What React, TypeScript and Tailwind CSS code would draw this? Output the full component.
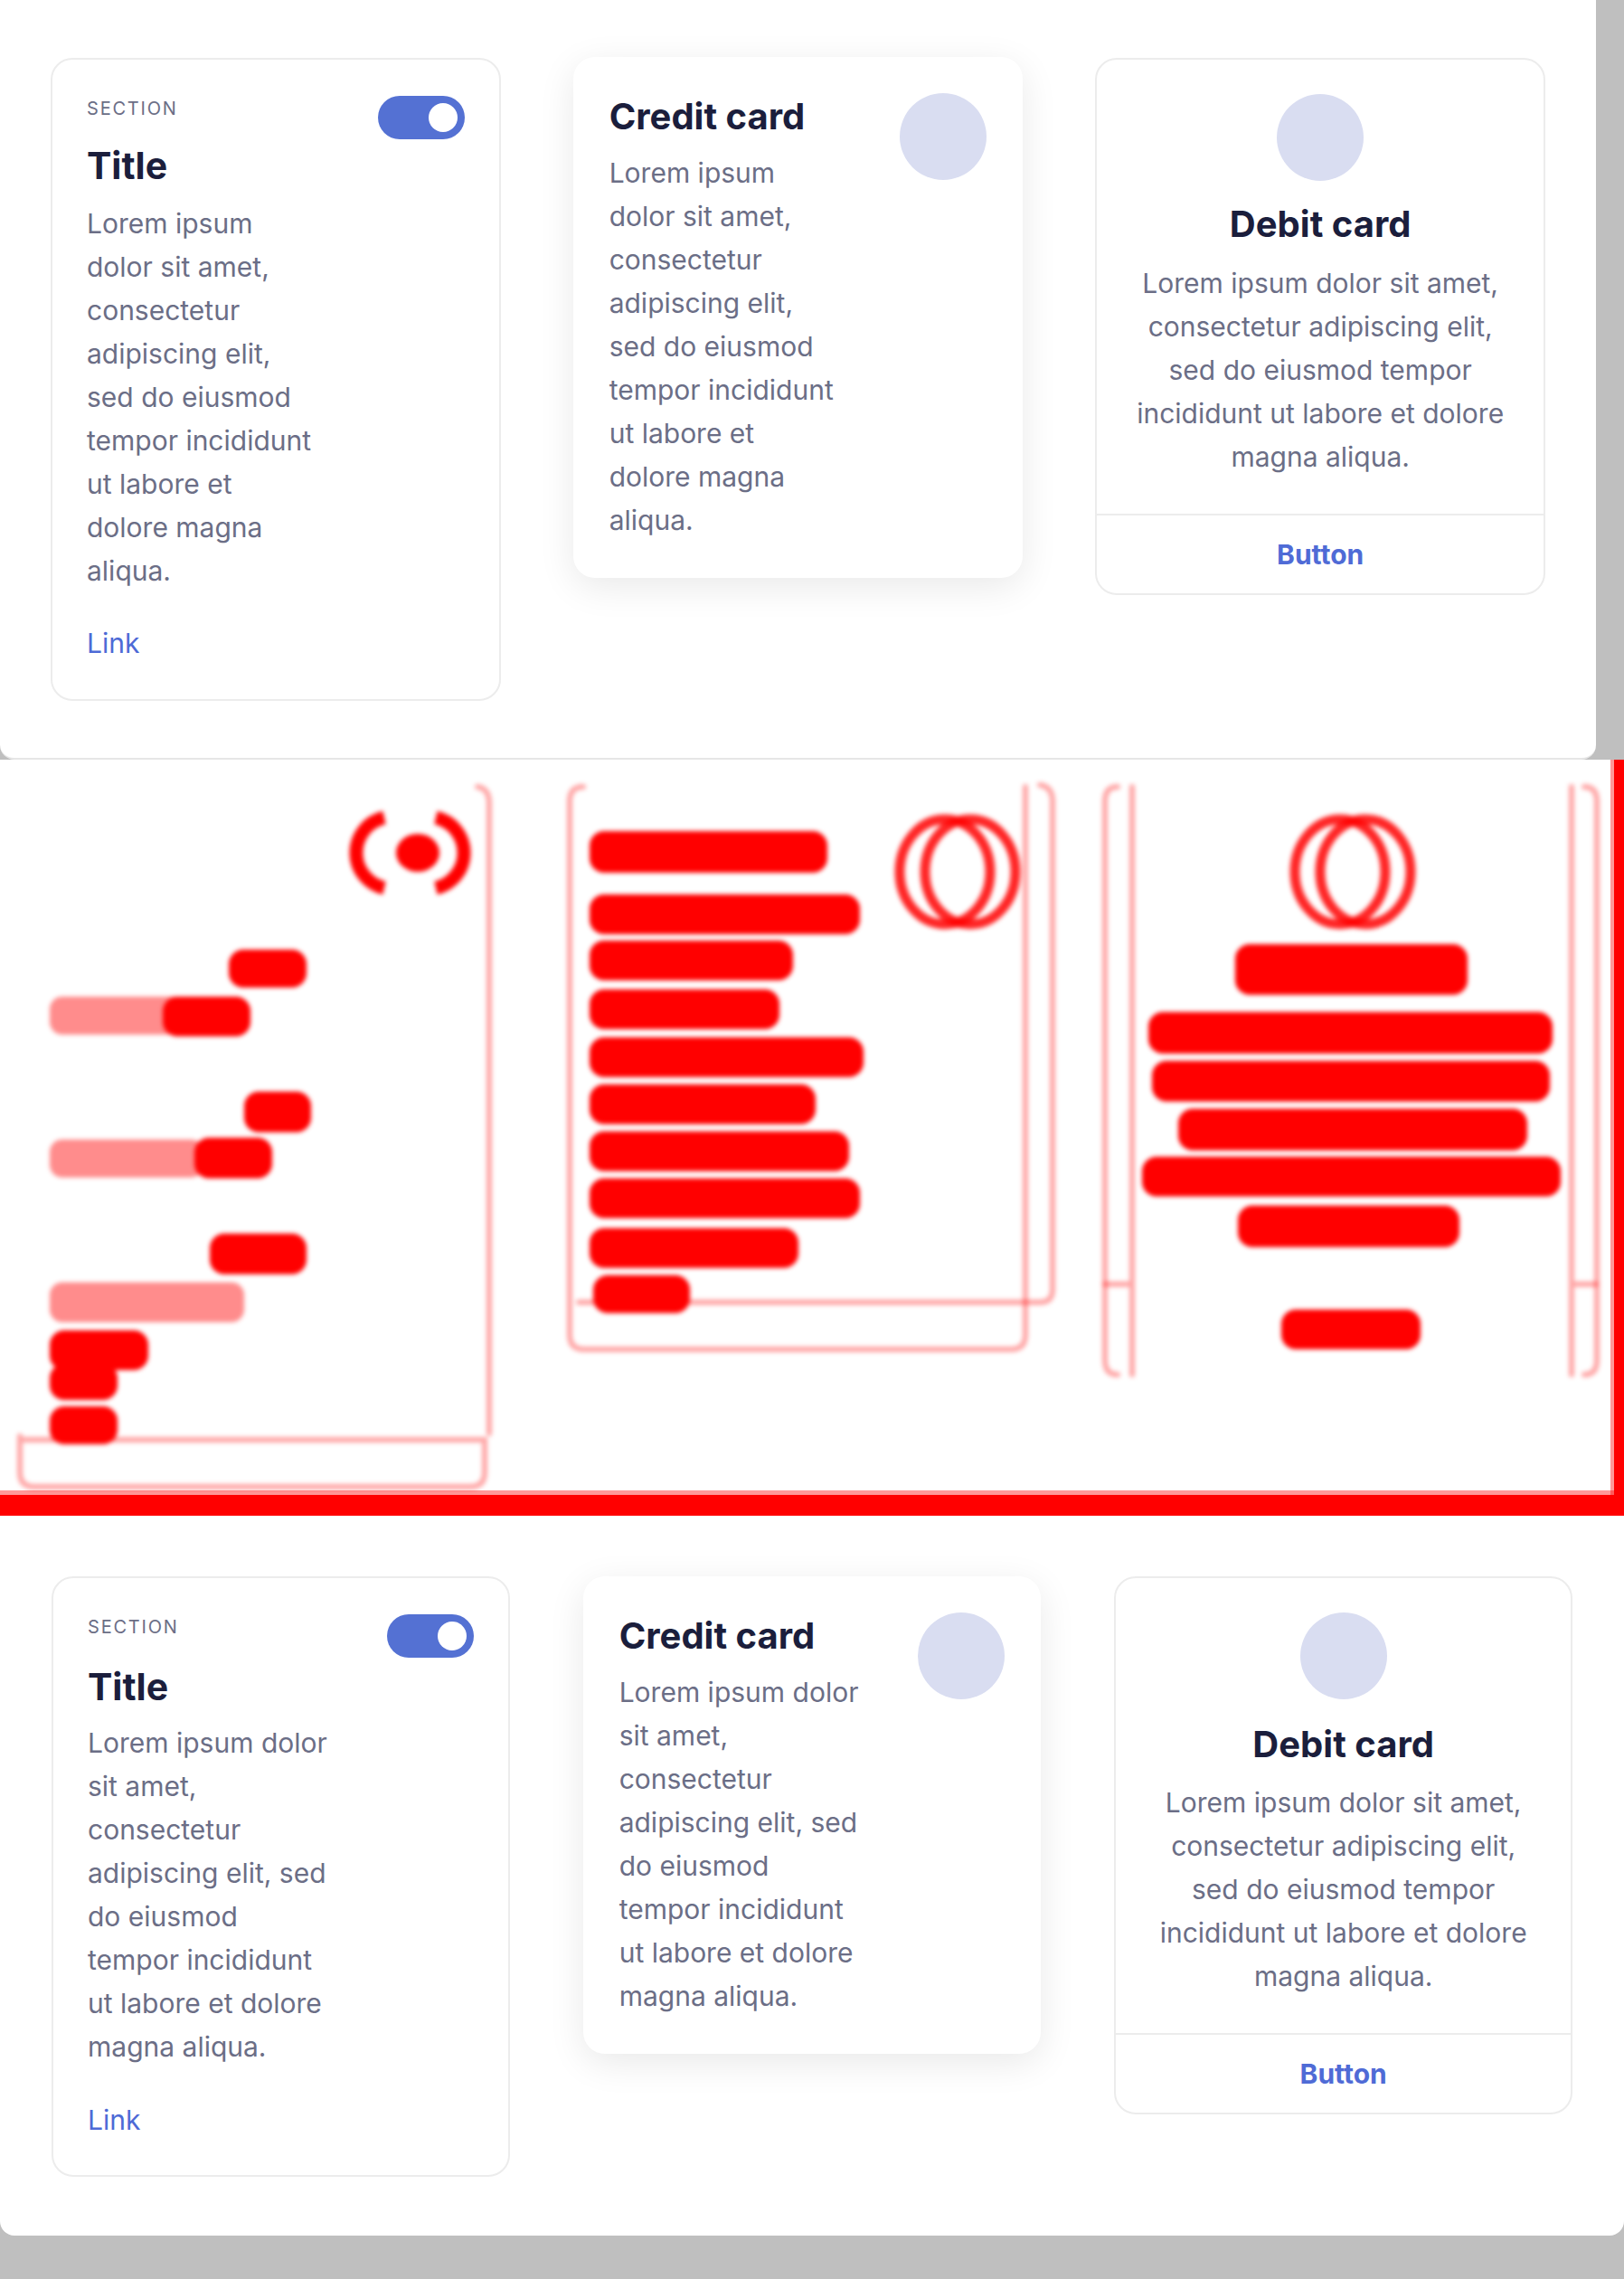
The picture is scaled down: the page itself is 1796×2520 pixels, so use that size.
import React from 'react'

const narrowLines = ['Lorem ipsum', 'dolor sit amet,', 'consectetur', 'adipiscing elit,', 'sed do eiusmod', 'tempor incididunt', 'ut labore et', 'dolore magna', 'aliqua.']
const wideLines = ['Lorem ipsum dolor', 'sit amet,', 'consectetur', 'adipiscing elit, sed', 'do eiusmod', 'tempor incididunt', 'ut labore et dolore', 'magna aliqua.']
const centerLines = ['Lorem ipsum dolor sit amet,', 'consectetur adipiscing elit,', 'sed do eiusmod tempor', 'incididunt ut labore et dolore', 'magna aliqua.']

function Lines({ lines, className = '' }: { lines: string[]; className?: string }) {
  return (
    <p className={`text-[30px] leading-[48px] text-[#6b6e86] ${className}`}>
      {lines.map((l, i) => (
        <span key={i} className="block whitespace-nowrap">{l}</span>
      ))}
    </p>
  )
}

function Toggle() {
  return (
    <div className="flex h-12 w-24 shrink-0 items-center justify-end rounded-full bg-[#5471d3] px-2">
      <div className="h-8 w-8 rounded-full bg-white" />
    </div>
  )
}

function SectionCard({ lines, wide }: { lines: string[]; wide?: boolean }) {
  return (
    <div className={`rounded-[24px] border-2 border-[#ececec] bg-white px-[38px] pt-10 ${wide ? 'pb-[37px]' : 'pb-[38px]'}`}>
      <div className="flex items-start justify-between">
        <div>
          <div className="text-[20px] leading-[28px] tracking-[0.09em] text-[#6b6e86]">SECTION</div>
          <h2 className={`${wide ? 'mt-[26px]' : 'mt-[23px]'} text-[41px] font-bold leading-[52px] text-[#1b1e3c]`}>Title</h2>
        </div>
        <Toggle />
      </div>
      <Lines lines={lines} className={wide ? 'mt-[12px]' : 'mt-[14px]'} />
      <a className={`${wide ? 'mt-[33px]' : 'mt-[32px]'} block text-[30px] leading-[48px] text-[#4d6ad6]`}>Link</a>
    </div>
  )
}

function CreditCard({ lines }: { lines: string[] }) {
  return (
    <div className="flex items-start justify-between rounded-[24px] bg-white p-10 shadow-[0_10px_40px_rgba(0,0,0,0.09)]">
      <div>
        <h2 className="text-[40px] font-bold leading-[52px] text-[#1b1e3c]">Credit card</h2>
        <Lines lines={lines} className="mt-[12px]" />
      </div>
      <div className="h-24 w-24 shrink-0 rounded-full bg-[#d9ddf1]" />
    </div>
  )
}

function DebitCard({ wide }: { wide?: boolean }) {
  return (
    <div className="rounded-[24px] border-2 border-[#ececec] bg-white text-center">
      <div className="flex flex-col items-center px-[38px] pt-[38px] pb-[39px]">
        <div className="h-24 w-24 rounded-full bg-[#d9ddf1]" />
        <h2 className={`${wide ? 'mt-[24px]' : 'mt-[22px]'} text-[40px] font-bold leading-[52px] text-[#1b1e3c]`}>Debit card</h2>
        <Lines lines={centerLines} className={wide ? 'mt-[14px]' : 'mt-[15px]'} />
      </div>
      <div className="border-t-2 border-[#ececec] pt-[19px] pb-[19px] text-[30px] font-bold leading-[48px] text-[#4f6bd6]">Button</div>
    </div>
  )
}

const solid: [number, number, number, number][] = [
  // card 1
  [253, 210, 86, 42], [180, 262, 97, 44], [270, 367, 74, 45], [215, 418, 86, 45], [232, 524, 107, 45],
  [55, 631, 109, 44], [55, 668, 75, 40], [55, 715, 75, 42],
  // card 2
  [652, 79, 263, 46], [652, 149, 299, 44], [652, 200, 225, 44], [652, 254, 210, 44], [652, 307, 303, 44],
  [652, 359, 250, 44], [652, 411, 287, 44], [652, 463, 299, 44], [652, 518, 231, 44], [656, 570, 107, 42],
  // card 3
  [1366, 204, 257, 56], [1270, 279, 447, 46], [1274, 333, 440, 45], [1303, 386, 386, 46], [1263, 439, 463, 44],
  [1369, 493, 245, 46], [1417, 608, 154, 44],
]

const faint: [number, number, number, number][] = [
  [55, 262, 150, 42], [55, 420, 170, 42], [55, 578, 215, 44],
]

function DiffImage() {
  return (
    <svg viewBox="0 0 1796 836" width="1796" height="836" className="block">
      <defs>
        <filter id="soft" x="-5%" y="-5%" width="110%" height="110%">
          <feGaussianBlur stdDeviation="2.5" />
        </filter>
      </defs>
      <g filter="url(#soft)">
        {/* ghost outlines */}
        <g fill="none" stroke="#ff0000" strokeOpacity="0.35" strokeWidth="6" strokeLinecap="round">
          <path d="M 528 30 Q 541 32 541 48 L 541 745" />
          <path d="M 22 748 L 22 788 Q 22 804 38 804 L 520 804 Q 536 804 536 788 L 536 752 L 22 752" />
          <path d="M 645 30 Q 630 30 630 46 L 630 636 Q 630 652 646 652 L 1118 652 Q 1134 652 1134 636 L 1134 30" />
          <path d="M 640 600 L 1150 600 Q 1164 600 1164 586 L 1164 46 Q 1164 30 1150 28" />
          <path d="M 1236 30 Q 1222 30 1222 46 L 1222 664 Q 1222 680 1236 680" />
          <path d="M 1252 30 L 1252 680 M 1222 580 L 1252 580" />
          <path d="M 1738 30 L 1738 680 M 1738 580 L 1765 580" />
          <path d="M 1752 30 Q 1766 30 1766 46 L 1766 664 Q 1766 680 1752 680" />
        </g>
        {/* toggle */}
        <g fill="none" stroke="#ff0000" strokeWidth="15">
          <path d="M 425 64 A 40 40 0 0 0 425 142" />
          <path d="M 482 64 A 40 40 0 0 1 482 142" />
        </g>
        <ellipse cx="462" cy="103" rx="24" ry="21" fill="#ff0000" />
        {/* avatar rings */}
        <g fill="none" stroke="#ff0000" strokeWidth="11" strokeOpacity="0.85">
          <ellipse cx="1045" cy="124" rx="50" ry="58" />
          <ellipse cx="1073" cy="124" rx="50" ry="58" />
          <ellipse cx="1482" cy="124" rx="50" ry="58" />
          <ellipse cx="1510" cy="124" rx="50" ry="58" />
        </g>
        {faint.map(([x, y, w, h], i) => (
          <rect key={`f${i}`} x={x} y={y} width={w} height={h} rx="14" fill="#ff0000" fillOpacity="0.45" />
        ))}
        {solid.map(([x, y, w, h], i) => (
          <rect key={`s${i}`} x={x} y={y} width={w} height={h} rx="16" fill="#ff0000" />
        ))}
      </g>
      <rect x="1781" y="0" width="4" height="836" fill="#ff0000" fillOpacity="0.4" />
      <rect x="1785" y="0" width="11" height="836" fill="#ff0000" />
      <rect x="0" y="808" width="1796" height="5" fill="#ff0000" fillOpacity="0.4" />
      <rect x="0" y="813" width="1796" height="23" fill="#ff0000" />
    </svg>
  )
}

export default function App() {
  return (
    <div className="h-[2520px] w-[1796px] overflow-hidden bg-[#bfbfbf] font-['Inter',sans-serif]">
      <section className="h-[840px] w-[1765px] rounded-b-[16px] border-b-2 border-[#e6e6e6] bg-white">
        <div className="grid grid-cols-3 items-start gap-x-20 px-14 pt-16">
          <SectionCard lines={narrowLines} />
          <div className="-mt-px">
            <CreditCard lines={narrowLines} />
          </div>
          <DebitCard />
        </div>
      </section>

      <div className="bg-white">
        <DiffImage />
      </div>

      <section className="h-[796px] rounded-b-[16px] bg-white">
        <div className="grid grid-cols-3 items-start gap-x-[81px] px-[57px] pt-[67px]">
          <SectionCard lines={wideLines} wide />
          <CreditCard lines={wideLines} />
          <DebitCard wide />
        </div>
      </section>
    </div>
  )
}
